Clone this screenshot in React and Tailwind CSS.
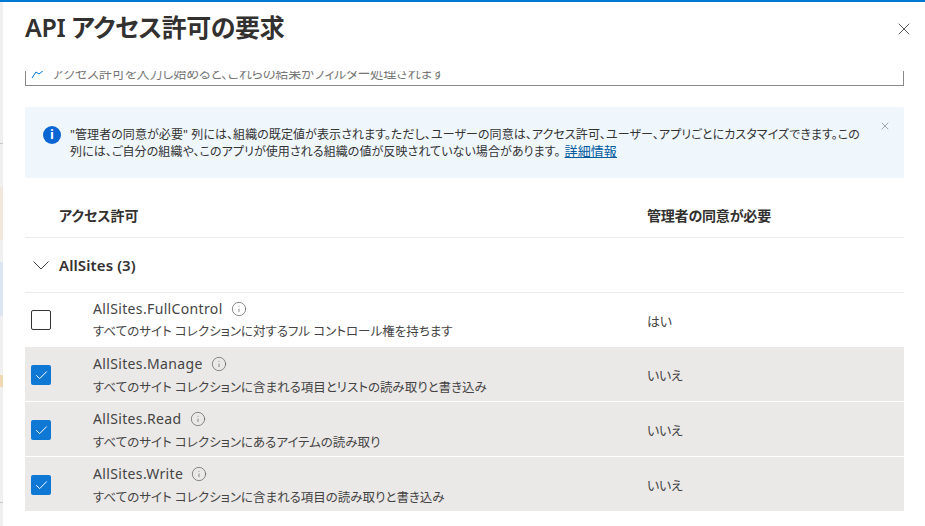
import React from "react";
import { X, Check, Info } from "lucide-react";

const rows = [
  { name: "AllSites.FullControl", desc: "すべてのサイト コレクションに対するフル コントロール権を持ちます", admin: "はい", checked: false },
  { name: "AllSites.Manage", desc: "すべてのサイト コレクションに含まれる項目とリストの読み取りと書き込み", admin: "いいえ", checked: true },
  { name: "AllSites.Read", desc: "すべてのサイト コレクションにあるアイテムの読み取り", admin: "いいえ", checked: true },
  { name: "AllSites.Write", desc: "すべてのサイト コレクションに含まれる項目の読み取りと書き込み", admin: "いいえ", checked: true },
];

function Row({ r }) {
  return (
    <div className={`flex h-[54px] ${r.checked ? "bg-[#ebe9e7] mb-px" : "bg-white"}`}>
      <div className={`w-[68px] pl-[6px] flex items-center ${r.checked ? "pt-[2px]" : ""}`}>
        {r.checked ? (
          <span className="w-5 h-5 rounded-[2px] bg-[#0f78d4] flex items-center justify-center">
            <Check size={15} strokeWidth={1.6} color="#fff" />
          </span>
        ) : (
          <span className="w-5 h-5 rounded-[2px] border border-[#333] bg-white" />
        )}
      </div>
      <div className={`w-[554px] text-[#444] ${r.checked ? "pt-[7px]" : "pt-[6px]"}`}>
        <div className="flex items-center h-[19px] text-[14px] leading-[19px] tracking-[0.35px]">
          {r.name}
          <Info size={16} strokeWidth={1} className="ml-[8px] text-[#555]" />
        </div>
        <div className={`text-[12.5px] leading-[19px] whitespace-nowrap ${r.checked ? "mt-[5px]" : "mt-[4px]"}`}>{r.desc}</div>
      </div>
      <div className="flex items-center pt-[3px] text-[13px] tracking-[-0.3px] text-[#444]">{r.admin}</div>
    </div>
  );
}

export default function App() {
  return (
    <div
      className="w-[925px] h-[526px] overflow-hidden relative bg-white border-t-2 border-[#0078d4] flex"
      style={{ fontFamily: '"Noto Sans", "Noto Sans CJK JP", sans-serif' }}
    >
      <div className="w-[3px] bg-[#f0f0f0] shrink-0 flex flex-col">
        <div className="h-[141px] shrink-0" />
        <div className="h-px bg-[#c8c8c8] shrink-0" />
        <div className="h-[43px] shrink-0" />
        <div className="h-[53px] bg-[#f0e8dc] shrink-0" />
        <div className="h-[22px] shrink-0" />
        <div className="h-[54px] bg-[#dde5f0] shrink-0" />
        <div className="h-[59px] shrink-0" />
        <div className="h-[12px] bg-[#f0d8b0] shrink-0" />
        <div className="h-[115px] shrink-0" />
        <div className="h-px bg-[#c8c8c8] shrink-0" />
      </div>
      <div className="flex-1 min-w-0 pl-[22px] pr-[21px] [font-feature-settings:'palt']">
        <div className="flex justify-between items-start h-[69px]">
          <h1 className="text-[25px] leading-[52px] font-semibold tracking-[-0.4px] text-[#323130] -mt-[1px]">API アクセス許可の要求</h1>
          <X size={20} strokeWidth={1} className="mt-[17px] -mr-[10px] text-[#333]" />
        </div>
        <div className="h-[15px] border-b border-x border-[#8a8886] overflow-hidden pl-[5px]">
          <div className="flex items-center text-[13px] tracking-[-0.1px] text-[#777] leading-[14px] h-[14px] -mt-[5px] whitespace-nowrap">
            <svg width="14" height="12" viewBox="0 0 14 12" className="mr-[7px] shrink-0" fill="none" stroke="#0078d4" strokeWidth="1"><path d="M1 11 L5 5 L8 7 L13 3" /></svg>
            アクセス許可を入力し始めると、これらの結果がフィルター処理されます
          </div>
        </div>
        <div className="mt-[21px] h-[71px] bg-[#eff6fc] rounded-[2px] flex pl-[18px] pt-[18px] relative">
          <span className="w-[18px] h-[18px] rounded-full bg-[#0b66d4] text-white flex items-center justify-center text-[13px] font-bold shrink-0 mr-[9px] mt-[1px]">i</span>
          <div className="text-[12px] tracking-[0.08px] leading-[16px] text-[#333] mt-[2px] whitespace-nowrap">
            "管理者の同意が必要" 列には、組織の既定値が表示されます。ただし、ユーザーの同意は、アクセス許可、ユーザー、アプリごとにカスタマイズできます。この
            <br />
            列には、ご自分の組織や、このアプリが使用される組織の値が反映されていない場合があります。
            <a className="underline text-[#005a9e] text-[13px] ml-[4px]">詳細情報</a>
          </div>
          <X size={12} strokeWidth={1} className="absolute right-[13px] top-[13px] text-[#555]" />
        </div>
        <div className="mt-[11px] h-[49px] pt-[4px] flex items-center border-b border-[#edebe9] text-[14px] font-semibold text-[#323130]">
          <div className="w-[622px] pl-[34px]">アクセス許可</div>
          <div className="tracking-[-0.2px]">管理者の同意が必要</div>
        </div>
        <div className="h-[55px] flex items-center border-b border-[#edebe9] text-[15px] font-semibold tracking-[0.1px] text-[#323130]">
          <svg width="16" height="9" viewBox="0 0 16 9" className="ml-[8px] mr-[10px] mt-[1px] shrink-0" fill="none" stroke="#444" strokeWidth="1"><path d="M0.5 0.5 L8 8 L15.5 0.5" /></svg>
          AllSites (3)
        </div>
        {rows.map((r) => <Row key={r.name} r={r} />)}
      </div>
    </div>
  );
}
